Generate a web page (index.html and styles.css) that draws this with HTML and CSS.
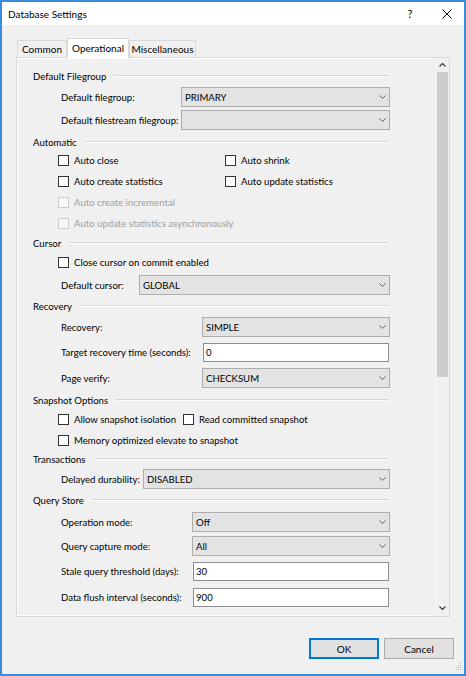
FILE: index.html
```html
<!DOCTYPE html>
<html>
<head>
<meta charset="utf-8">
<link rel="stylesheet" href="styles.css">
</head>
<body>
<div class="window">
  <div class="titlebar">
    <span class="title">Database Settings</span>
    <span class="help">?</span>
    <svg class="close" width="10" height="10" viewBox="0 0 10 10"><path d="M0.5 0.5L9.5 9.5M9.5 0.5L0.5 9.5" stroke="#000" stroke-width="1" fill="none"/></svg>
  </div>
  <div class="client">
    <div class="tabs">
      <div class="tab tab-common">Common</div>
      <div class="tab tab-oper active">Operational</div>
      <div class="tab tab-misc">Miscellaneous</div>
    </div>
    <div class="page">
      <div class="content">
        <div class="heading"><span>Default Filegroup</span><i class="rule"></i></div>
        <div class="row field m5"><span class="label w-fg">Default filegroup:</span><div class="select">PRIMARY<svg class="chev" width="7" height="4" viewBox="0 0 7 4"><path d="M0.5 0.5L3.5 3.5L6.5 0.5" stroke="#5a5a5a" fill="none"/></svg></div></div>
        <div class="row field m7"><span class="label w-fg">Default filestream filegroup:</span><div class="select"><svg class="chev" width="7" height="4" viewBox="0 0 7 4"><path d="M0.5 0.5L3.5 3.5L6.5 0.5" stroke="#5a5a5a" fill="none"/></svg></div></div>

        <div class="heading m6"><span>Automatic</span><i class="rule"></i></div>
        <div class="row cbrow m2"><label class="cb col1"><i class="box"></i>Auto close</label><label class="cb"><i class="box"></i>Auto shrink</label></div>
        <div class="row cbrow m5"><label class="cb col1"><i class="box"></i>Auto create statistics</label><label class="cb"><i class="box"></i>Auto update statistics</label></div>
        <div class="row cbrow m5"><label class="cb disabled"><i class="box"></i>Auto create incremental</label></div>
        <div class="row cbrow m5"><label class="cb disabled"><i class="box"></i>Auto update statistics asynchronously</label></div>

        <div class="heading m4"><span>Cursor</span><i class="rule"></i></div>
        <div class="row cbrow m3"><label class="cb"><i class="box"></i>Close cursor on commit enabled</label></div>
        <div class="row field m7"><span class="label w-cur">Default cursor:</span><div class="select">GLOBAL<svg class="chev" width="7" height="4" viewBox="0 0 7 4"><path d="M0.5 0.5L3.5 3.5L6.5 0.5" stroke="#5a5a5a" fill="none"/></svg></div></div>

        <div class="heading m5"><span>Recovery</span><i class="rule"></i></div>
        <div class="row field m5"><span class="label w-rec">Recovery:</span><div class="select">SIMPLE<svg class="chev" width="7" height="4" viewBox="0 0 7 4"><path d="M0.5 0.5L3.5 3.5L6.5 0.5" stroke="#5a5a5a" fill="none"/></svg></div></div>
        <div class="row field m9"><span class="label w-rec">Target recovery time (seconds):</span><div class="input">0</div></div>
        <div class="row field m10"><span class="label w-rec">Page verify:</span><div class="select">CHECKSUM<svg class="chev" width="7" height="4" viewBox="0 0 7 4"><path d="M0.5 0.5L3.5 3.5L6.5 0.5" stroke="#5a5a5a" fill="none"/></svg></div></div>

        <div class="heading m6"><span>Snapshot Options</span><i class="rule"></i></div>
        <div class="row cbrow m3"><label class="cb col-snap"><i class="box"></i>Allow snapshot isolation</label><label class="cb"><i class="box"></i>Read committed snapshot</label></div>
        <div class="row cbrow m5"><label class="cb"><i class="box"></i>Memory optimized elevate to snapshot</label></div>

        <div class="heading m3"><span>Transactions</span><i class="rule"></i></div>
        <div class="row field m4"><span class="label w-tr">Delayed durability:</span><div class="select">DISABLED<svg class="chev" width="7" height="4" viewBox="0 0 7 4"><path d="M0.5 0.5L3.5 3.5L6.5 0.5" stroke="#5a5a5a" fill="none"/></svg></div></div>

        <div class="heading m5"><span>Query Store</span><i class="rule"></i></div>
        <div class="row field m6"><span class="label w-qs">Operation mode:</span><div class="select">Off<svg class="chev" width="7" height="4" viewBox="0 0 7 4"><path d="M0.5 0.5L3.5 3.5L6.5 0.5" stroke="#5a5a5a" fill="none"/></svg></div></div>
        <div class="row field m8"><span class="label w-qs">Query capture mode:</span><div class="select">All<svg class="chev" width="7" height="4" viewBox="0 0 7 4"><path d="M0.5 0.5L3.5 3.5L6.5 0.5" stroke="#5a5a5a" fill="none"/></svg></div></div>
        <div class="row field m9"><span class="label w-qs">Stale query threshold (days):</span><div class="input">30</div></div>
        <div class="row field m11"><span class="label w-qs">Data flush interval (seconds):</span><div class="input">900</div></div>
      </div>
      <div class="scrollbar">
        <div class="sb-btn sb-up"><svg width="7" height="4" viewBox="0 0 7 4"><path d="M0.5 3.5L3.5 0.5L6.5 3.5" stroke="#404040" stroke-width="1.2" fill="none"/></svg></div>
        <div class="thumb"></div>
        <div class="track"></div>
        <div class="sb-btn sb-down"><svg width="7" height="4" viewBox="0 0 7 4"><path d="M0.5 0.5L3.5 3.5L6.5 0.5" stroke="#404040" stroke-width="1.2" fill="none"/></svg></div>
      </div>
    </div>
    <div class="buttons">
      <div class="btn btn-default">OK</div>
      <div class="btn">Cancel</div>
    </div>
  </div>
  <svg class="grip" width="8" height="8" viewBox="0 0 8 8"><g fill="#b8b8b8"><rect x="6" y="0" width="1" height="1"/><rect x="4" y="2" width="1" height="1"/><rect x="6" y="2" width="1" height="1"/><rect x="2" y="4" width="1" height="1"/><rect x="4" y="4" width="1" height="1"/><rect x="6" y="4" width="1" height="1"/><rect x="0" y="6" width="1" height="1"/><rect x="2" y="6" width="1" height="1"/><rect x="4" y="6" width="1" height="1"/><rect x="6" y="6" width="1" height="1"/></g></svg>
</div>
</body>
</html>
```

FILE: styles.css
```css
html, body {
  margin: 0;
  padding: 0;
  background: #f0f0f0;
}
body {
  font-family: Lato, "Liberation Sans", sans-serif;
  font-size: 9.6px;
  color: #000;
}
.window {
  position: relative;
  width: 466px;
  height: 676px;
  box-sizing: border-box;
  border: 2px solid #3b8ddc;
  background: #f0f0f0;
  overflow: hidden;
}
.titlebar {
  height: 23px;
  background: #fff;
  display: flex;
  align-items: center;
  padding-left: 6px;
}
.title {
  flex: 1;
  font-size: 10px;
}
.help {
  font-size: 11px;
  width: 10px;
  text-align: center;
  margin-right: 27px;
}
.close {
  margin-right: 12px;
}
.client {
  padding-top: 13px;
}
.tabs {
  display: flex;
  align-items: flex-end;
  height: 19px;
  margin-left: 15px;
  position: relative;
  z-index: 1;
}
.tab {
  box-sizing: border-box;
  height: 17px;
  border: 1px solid #d9d9d9;
  border-bottom: none;
  background: #f0f0f0;
  display: flex;
  align-items: center;
  justify-content: center;
  font-size: 10px;
}
.tab-common { width: 50px; }
.tab-oper { width: 62px; }
.tab-misc { width: 67px; }
.tab.active {
  height: 20px;
  background: #fff;
  margin-bottom: -1px;
  border-left: 1px solid #d9d9d9;
  border-right: 1px solid #d9d9d9;
  padding-bottom: 2px;
}
.page {
  margin-left: 14px;
  width: 434px;
  height: 560px;
  box-sizing: border-box;
  border: 1px solid #d9d9d9;
  box-shadow: inset 1px 1px 0 #fff, inset -1px -1px 0 #fff;
  display: flex;
  overflow: hidden;
}
.content {
  flex: 1;
  padding: 10px 45px 0 16px;
}
.heading {
  height: 16px;
  display: flex;
  align-items: center;
}
.rule {
  flex: 1;
  height: 0;
  border-top: 1px solid #d5d5d5;
  border-bottom: 1px solid #fff;
  margin-left: 8px;
  margin-right: 2px;
}
.row {
  height: 16px;
  display: flex;
  align-items: center;
}
.field {
  padding-left: 28px;
}
.cbrow {
  padding-left: 25px;
}
.label {
  flex: none;
  white-space: nowrap;
}
.w-fg { width: 120px; }
.w-cur { width: 78px; }
.w-rec { width: 141px; }
.w-tr { width: 82px; }
.w-qs { width: 131px; }
.select {
  flex: 1;
  height: 20px;
  box-sizing: border-box;
  border: 1px solid #adadad;
  background: #e3e3e3;
  display: flex;
  align-items: center;
  padding-left: 3px;
  position: relative;
}
.chev {
  margin-left: auto;
  margin-right: 3px;
}
.input {
  flex: 1;
  height: 19px;
  margin: 0 1px;
  box-sizing: border-box;
  border: 1px solid #8f8f8f;
  background: #fff;
  display: flex;
  align-items: center;
  padding-left: 2px;
}
.cb {
  display: flex;
  align-items: center;
  white-space: nowrap;
}
.box {
  width: 11px;
  height: 11px;
  box-sizing: border-box;
  border: 1px solid #333;
  background: #fff;
  margin-right: 5px;
  flex: none;
}
.col1 { width: 167px; }
.col-snap { width: 125px; }
.cb.disabled { color: #a0a0a0; }
.cb.disabled .box { border-color: #cccccc; background: #f7f7f7; }
.scrollbar {
  width: 13px;
  flex: none;
  display: flex;
  flex-direction: column;
  background: #f0f0f0;
  border-left: 1px solid #f7f7f7;
}
.sb-btn {
  display: flex;
  align-items: center;
  justify-content: center;
}
.sb-up { height: 14px; }
.sb-down { height: 16px; }
.thumb {
  height: 305px;
  margin: 0 1px;
  background: #cdcdcd;
}
.track { flex: 1; }
.buttons {
  display: flex;
  justify-content: flex-end;
  gap: 5px;
  margin-top: 21px;
  padding-right: 10px;
}
.btn {
  width: 70px;
  height: 21px;
  box-sizing: border-box;
  border: 1px solid #adadad;
  background: #e1e1e1;
  display: flex;
  align-items: center;
  justify-content: center;
  font-size: 10px;
}
.btn-default {
  border: 1px solid #0078d7;
  box-shadow: inset 0 0 0 1px #0078d7;
}
.grip {
  position: absolute;
  right: 2px;
  bottom: 3px;
}
.m2 { margin-top: 2px; }
.m3 { margin-top: 3px; }
.m4 { margin-top: 4px; }
.m5 { margin-top: 5px; }
.m6 { margin-top: 6px; }
.m7 { margin-top: 7px; }
.m8 { margin-top: 8px; }
.m9 { margin-top: 9px; }
.m10 { margin-top: 10px; }
.m11 { margin-top: 10px; }
```
